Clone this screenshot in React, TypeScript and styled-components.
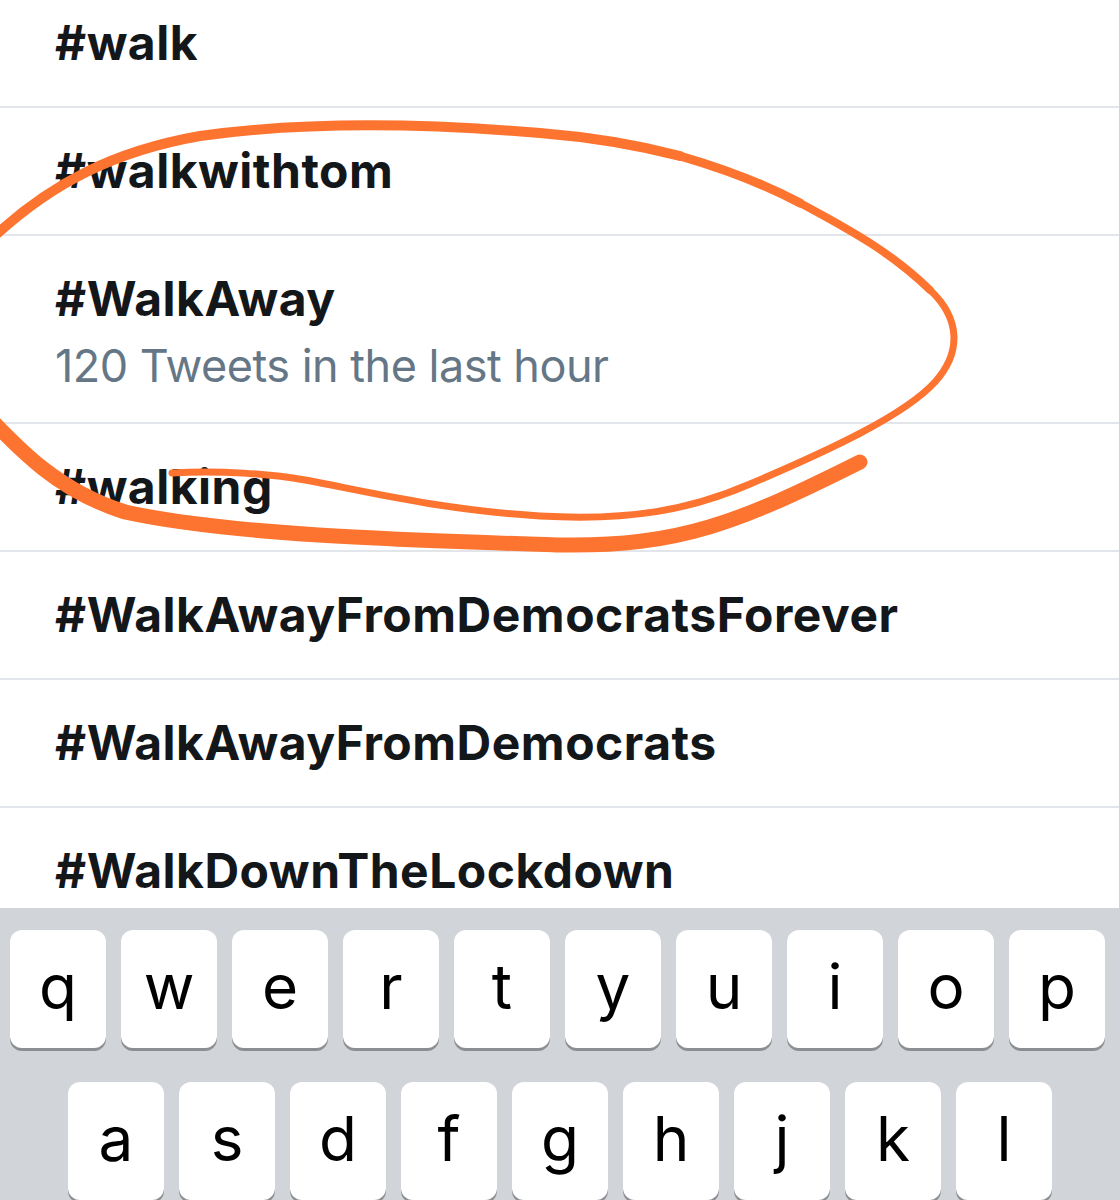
import React from "react";
import styled, { createGlobalStyle } from "styled-components";

type Trend = {
  tag: string;
  meta?: string;
};

const TRENDS: Trend[] = [
  { tag: "#walk" },
  { tag: "#walkwithtom" },
  { tag: "#WalkAway", meta: "120 Tweets in the last hour" },
  { tag: "#walking" },
  { tag: "#WalkAwayFromDemocratsForever" },
  { tag: "#WalkAwayFromDemocrats" },
  { tag: "#WalkDownTheLockdown" },
];

const KEY_ROWS = [
  ["q", "w", "e", "r", "t", "y", "u", "i", "o", "p"],
  ["a", "s", "d", "f", "g", "h", "j", "k", "l"],
];

const App = () => {
  return (
    <>
      <GlobalStyle />
      <Screen>
        <TrendList>
          <Rows>
            {TRENDS.map((trend) => (
              <TrendRow key={trend.tag}>
                <TrendTag>{trend.tag}</TrendTag>
                {trend.meta && <TrendMeta>{trend.meta}</TrendMeta>}
              </TrendRow>
            ))}
          </Rows>
        </TrendList>
        <Keyboard>
          {KEY_ROWS.map((row, i) => (
            <KeyRow key={i} $indent={i === 0 ? 10 : 68}>
              {row.map((letter) => (
                <Key key={letter}>{letter}</Key>
              ))}
            </KeyRow>
          ))}
        </Keyboard>
        <Scribble viewBox="0 0 1119 908" width="1119" height="908">
          {/* inner end of the loop, round the right side */}
          <path
            d="M 172 473 C 220 470 270 474 305 480 C 360 490 440 510 540 516 C 630 521 690 510 750 484 C 830 450 905 415 935 382 C 962 352 960 318 930 290"
            strokeWidth="7"
          />
          {/* upper right shoulder, getting heavier */}
          <path d="M 930 290 C 895 256 860 235 800 203" strokeWidth="8" />
          <path d="M 800 203 C 770 187 735 172 680 156" strokeWidth="9" />
          {/* top of the loop, heading off the left edge */}
          <path
            d="M 680 156 C 630 143 590 137 540 133 C 420 123 300 122 200 136 C 120 150 50 180 -20 250"
            strokeWidth="10"
          />
          {/* lower sweep coming back in from the left */}
          <path
            d="M -20 408 C 15 445 55 490 125 512 C 230 535 400 540 560 545 C 680 547 740 522 860 462"
            strokeWidth="15"
          />
        </Scribble>
      </Screen>
    </>
  );
};

export default App;

const GlobalStyle = createGlobalStyle`
  body {
    margin: 0;
    background: #fff;
  }
`;

const Screen = styled.div`
  position: relative;
  width: 1119px;
  height: 1200px;
  overflow: hidden;
  display: flex;
  flex-direction: column;
  background: #fff;
  font-family: Inter, "Noto Sans", sans-serif;
`;

const TrendList = styled.div`
  flex: none;
  height: 908px;
  overflow: hidden;
`;

const Rows = styled.ul`
  list-style: none;
  margin: -20px 0 0 0;
  padding: 0;
`;

const TrendRow = styled.li`
  display: flex;
  flex-direction: column;
  padding: 32px 0 32px 55px;
  border-bottom: 2px solid #e2e5e9;
`;

const TrendTag = styled.span`
  font-size: 48px;
  font-weight: 700;
  line-height: 62px;
  letter-spacing: 0.5px;
  color: #14171a;
`;

const TrendMeta = styled.span`
  margin: 6px 0 -6px;
  font-size: 45px;
  font-weight: 400;
  line-height: 60px;
  letter-spacing: -0.5px;
  color: #657786;
`;

const Keyboard = styled.div`
  flex: 1;
  display: flex;
  flex-direction: column;
  gap: 34px;
  padding-top: 22px;
  background: #d1d4d9;
`;

const KeyRow = styled.div<{ $indent: number }>`
  display: flex;
  gap: 15px;
  padding-left: ${(p) => p.$indent}px;
`;

const Key = styled.div`
  flex: none;
  width: 96px;
  height: 118px;
  display: flex;
  align-items: center;
  justify-content: center;
  padding-bottom: 6px;
  box-sizing: border-box;
  background: #fff;
  border-radius: 12px;
  box-shadow: 0 3px 0 #8c8e92;
  font-size: 62px;
  font-weight: 400;
  color: #000;
`;

const Scribble = styled.svg`
  position: absolute;
  top: 0;
  left: 0;
  pointer-events: none;
  fill: none;
  stroke: #fd7431;
  stroke-linecap: round;
  stroke-linejoin: round;
`;
